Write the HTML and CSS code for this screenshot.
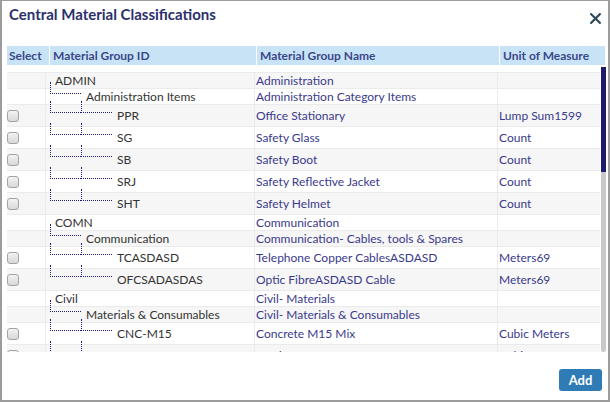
FILE: index.html
```html
<!DOCTYPE html>
<html>
<head>
<meta charset="utf-8">
<link rel="stylesheet" href="styles.css">
</head>
<body>
<div class="modal">
  <div class="title-bar">
    <h1 class="title">Central Material Classifications</h1>
    <svg class="close" width="11" height="11" viewBox="0 0 11 11"><path d="M1.2 1.2 L9.8 9.8 M9.8 1.2 L1.2 9.8" stroke="#2e4a5c" stroke-width="2.2" stroke-linecap="square"/></svg>
  </div>
  <div class="grid-head">
    <div class="hc first">Select</div>
    <div class="hc">Material Group ID</div>
    <div class="hc">Material Group Name</div>
    <div class="hc">Unit of Measure</div>
  </div>
  <div class="body-wrap">
    <div class="rows">
      <div class="row short odd"><div class="c sel"></div><div class="c id"><span class="lbl">ADMIN</span></div><div class="c name">Administration</div><div class="c uom"></div></div>
      <div class="row short"><div class="c sel"></div><div class="c id"><span class="conn"><span class="seg"></span></span><span class="lbl">Administration Items</span></div><div class="c name">Administration Category Items</div><div class="c uom"></div></div>
      <div class="row tall odd"><div class="c sel"><span class="cb"></span></div><div class="c id"><span class="conn"><span class="seg"></span><span class="seg"></span></span><span class="lbl">PPR</span></div><div class="c name">Office Stationary</div><div class="c uom">Lump Sum1599</div></div>
      <div class="row tall"><div class="c sel"><span class="cb"></span></div><div class="c id"><span class="conn"><span class="seg"></span><span class="seg"></span></span><span class="lbl">SG</span></div><div class="c name">Safety Glass</div><div class="c uom">Count</div></div>
      <div class="row tall odd"><div class="c sel"><span class="cb"></span></div><div class="c id"><span class="conn"><span class="seg"></span><span class="seg"></span></span><span class="lbl">SB</span></div><div class="c name">Safety Boot</div><div class="c uom">Count</div></div>
      <div class="row tall"><div class="c sel"><span class="cb"></span></div><div class="c id"><span class="conn"><span class="seg"></span><span class="seg"></span></span><span class="lbl">SRJ</span></div><div class="c name">Safety Reflective Jacket</div><div class="c uom">Count</div></div>
      <div class="row tall odd"><div class="c sel"><span class="cb"></span></div><div class="c id"><span class="conn"><span class="seg"></span><span class="seg"></span></span><span class="lbl">SHT</span></div><div class="c name">Safety Helmet</div><div class="c uom">Count</div></div>
      <div class="row short"><div class="c sel"></div><div class="c id"><span class="lbl">COMN</span></div><div class="c name">Communication</div><div class="c uom"></div></div>
      <div class="row short odd"><div class="c sel"></div><div class="c id"><span class="conn"><span class="seg"></span></span><span class="lbl">Communication</span></div><div class="c name">Communication- Cables, tools &amp; Spares</div><div class="c uom"></div></div>
      <div class="row tall"><div class="c sel"><span class="cb"></span></div><div class="c id"><span class="conn"><span class="seg"></span><span class="seg"></span></span><span class="lbl">TCASDASD</span></div><div class="c name">Telephone Copper CablesASDASD</div><div class="c uom">Meters69</div></div>
      <div class="row tall odd"><div class="c sel"><span class="cb"></span></div><div class="c id"><span class="conn"><span class="seg"></span><span class="seg"></span></span><span class="lbl">OFCSADASDAS</span></div><div class="c name">Optic FibreASDASD Cable</div><div class="c uom">Meters69</div></div>
      <div class="row short"><div class="c sel"></div><div class="c id"><span class="lbl">Civil</span></div><div class="c name">Civil- Materials</div><div class="c uom"></div></div>
      <div class="row short odd"><div class="c sel"></div><div class="c id"><span class="conn"><span class="seg"></span></span><span class="lbl">Materials &amp; Consumables</span></div><div class="c name">Civil- Materials &amp; Consumables</div><div class="c uom"></div></div>
      <div class="row tall"><div class="c sel"><span class="cb"></span></div><div class="c id"><span class="conn"><span class="seg"></span><span class="seg"></span></span><span class="lbl">CNC-M15</span></div><div class="c name">Concrete M15 Mix</div><div class="c uom">Cubic Meters</div></div>
      <div class="row tall odd"><div class="c sel"><span class="cb"></span></div><div class="c id"><span class="conn"><span class="seg"></span><span class="seg"></span></span><span class="lbl">SND</span></div><div class="c name">Sand</div><div class="c uom">Cubic Meters</div></div>
      <div class="row tall"><div class="c sel"><span class="cb"></span></div><div class="c id"><span class="conn"><span class="seg"></span><span class="seg"></span></span><span class="lbl">AGG</span></div><div class="c name">Aggregate</div><div class="c uom">Cubic Meters</div></div>
    </div>
    <div class="sb"><div class="thumb"></div></div>
  </div>
  <div class="foot">
    <button class="btn" type="button">Add</button>
  </div>
</div>
</body>
</html>
```
FILE: styles.css
```css
* { box-sizing: border-box; }
html, body { margin: 0; padding: 0; }
body {
  width: 610px;
  height: 402px;
  overflow: hidden;
  background: #fff;
  font-family: Lato, "Open Sans", sans-serif;
}
.modal {
  width: 610px;
  height: 402px;
  border: 2px solid #9c9c9c;
  border-top-width: 1px;
  display: flex;
  flex-direction: column;
}
.title-bar {
  height: 45px;
  flex: none;
  display: flex;
  justify-content: space-between;
  align-items: flex-start;
  padding: 4px 7px 0 7px;
}
.title {
  margin: 0;
  font-size: 15px;
  line-height: 18px;
  font-weight: 700;
  color: #2b2f6c;
}
.close { margin-top: 8px; }
.grid-head {
  flex: none;
  height: 19px;
  margin: 0 3px 0 5px;
  display: grid;
  grid-template-columns: 42px 207px 243px 1fr;
  background: #c9e3f6;
}
.hc {
  display: flex;
  align-items: center;
  border-left: 1px solid #fff;
  padding-left: 3px;
  font-size: 12px;
  font-weight: 700;
  color: #3b4889;
  white-space: nowrap;
}
.hc.first { border-left: none; padding-left: 2px; }
.body-wrap {
  flex: none;
  height: 285px;
  margin: 2px 2px 0 5px;
  display: flex;
}
.rows {
  flex: 1;
  overflow: hidden;
  padding-top: 5px;
}
.row {
  display: grid;
  grid-template-columns: 38px 209px 243px 1fr;
  grid-template-rows: minmax(0, 1fr);
  border-top: 1px solid #ebebeb;
  font-size: 12px;
  line-height: 14px;
  background: #fff;
}
.row.odd { background: #f6f6f6; }
.row.short { height: 16px; }
.row.tall { height: 22px; }
.c {
  display: flex;
  align-items: center;
  min-height: 0;
  border-left: 1px solid #ebebeb;
  padding-left: 1px;
  white-space: nowrap;
  color: #3a3a8c;
}
.c.sel { border-left: none; padding-left: 0; }
.c.id { padding-left: 4px; color: #333; }
.cb {
  width: 12px;
  height: 12px;
  border: 1px solid #a3a3a3;
  border-radius: 3px;
  background: linear-gradient(#f2f2f2, #d8d8d8);
}
.conn {
  display: flex;
  flex: none;
  height: 12px;
  margin-top: -15px;
  margin-bottom: 3px;
}
.seg {
  width: 31px;
  height: 12px;
  border-left: 1px dotted #1d1d80;
  border-bottom: 1px dotted #1d1d80;
}
.lbl { margin-left: 5px; }
.sb {
  flex: none;
  width: 5px;
  margin-left: 1px;
  background: #c9c9c9;
  border-radius: 0 0 3px 3px;
}
.thumb {
  height: 105px;
  background: #1c1c6b;
}
.foot {
  flex: 1;
  display: flex;
  justify-content: flex-end;
  align-items: flex-start;
  padding: 17px 6px 0 0;
}
.btn {
  width: 43px;
  height: 22px;
  border: none;
  border-radius: 3px;
  background: #2f7bb6;
  color: #fff;
  font-family: Lato, "Open Sans", sans-serif;
  font-size: 13px;
  font-weight: 700;
  padding: 0;
}
```
